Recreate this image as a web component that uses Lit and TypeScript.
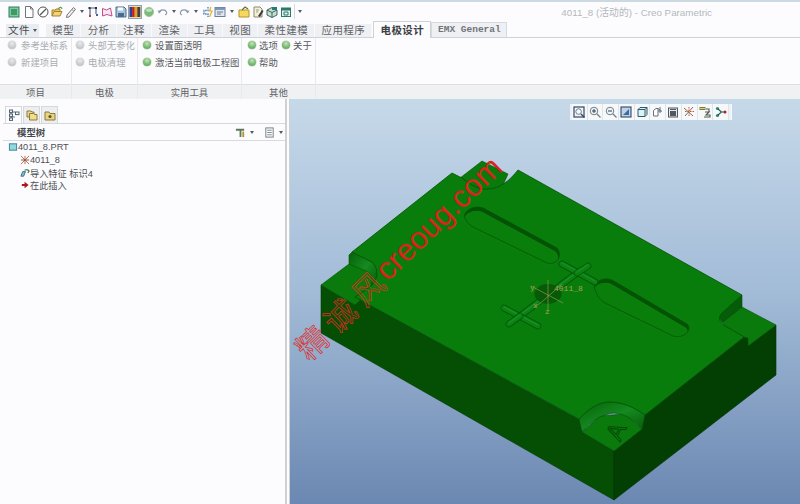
import { LitElement, html, svg, css } from 'lit';
import { customElement } from 'lit/decorators.js';

// quick access toolbar icons, 12x12 box
const quickIcons: Record<string, unknown> = {
  model: svg`<rect x="1" y="1" width="10" height="10" fill="#7fc9a8" stroke="#2f7d5a"/><rect x="3" y="3" width="6" height="6" fill="#3f9a5f"/>`,
  doc: svg`<path d="M2.5 .5h5l2.5 2.5v8.5h-7.5z" fill="#fff" stroke="#6e7478"/><path d="M7.5 .5v2.5h2.5" fill="none" stroke="#6e7478"/>`,
  no: svg`<circle cx="6" cy="6" r="5" fill="#fff" stroke="#555"/><path d="M3 9l6-6" stroke="#555" stroke-width="1.2"/>`,
  open: svg`<path d="M1 10V4h3l1-1h4v2" fill="#e8c468" stroke="#a8832c"/><path d="M1 10l2-4.5h8L9 10z" fill="#f2d27c" stroke="#a8832c"/><path d="M7 2.5l3-1.5 1 2" fill="none" stroke="#4a8a3a"/>`,
  pencil: svg`<path d="M2 9l6.5-7.5 2 1.8L4 11l-2.5.5z" fill="#f0f0f0" stroke="#777"/><path d="M7 3.5l2 1.8" stroke="#999"/>`,
  frame: svg`<path d="M3 10V2h6v6" fill="none" stroke="#4a5a78" stroke-width="1.1"/><rect x="1.5" y="1" width="2" height="2" fill="#24304a"/><rect x="8" y="1" width="2" height="2" fill="#24304a"/><rect x="2" y="9" width="2" height="2" fill="#c04040"/><rect x="9" y="8" width="2" height="2" fill="#4060b0"/>`,
  pink: svg`<path d="M1.5 2.5l4 1.5 4-2 1.5 8-5-1.5-4.5 1.5z" fill="#f6e4f0" stroke="#c0508a"/>`,
  save: svg`<path d="M1 1h8l2 2v8H1z" fill="#a8c4dc" stroke="#486c90"/><rect x="3" y="1.5" width="5" height="3" fill="#fff"/><rect x="3" y="7" width="6" height="4" fill="#486c90"/>`,
  colors: svg`<rect x=".5" y="1" width="2.6" height="10" fill="#2b3f9c"/><rect x="3.1" y="1" width="2.6" height="10" fill="#c02020"/><rect x="5.7" y="1" width="2.6" height="10" fill="#e0a020"/><rect x="8.3" y="1" width="3" height="10" fill="#404040"/>`,
  ball: svg`<circle cx="6" cy="6" r="4.6" fill="#7cba7c" stroke="#a4c8a4"/><ellipse cx="6" cy="4.2" rx="3" ry="1.7" fill="#bfe0bf"/>`,
  undo: svg`<path d="M2 6.5a4 3.4 0 0 1 7.6-.6c.4 1.4-.4 2.6-1.4 3.2" fill="none" stroke="#8a9aa8" stroke-width="1.2"/><path d="M.5 4.5l1.8 3 2-2.4z" fill="#8a9aa8"/>`,
  redo: svg`<path d="M10 6.5a4 3.4 0 0 0-7.6-.6c-.4 1.4.4 2.6 1.4 3.2" fill="none" stroke="#8a9aa8" stroke-width="1.2"/><path d="M11.5 4.5l-1.8 3-2-2.4z" fill="#8a9aa8"/>`,
  regen: svg`<path d="M7 1v3.5H3V8h4v3" fill="none" stroke="#5080b0" stroke-width="1.4" stroke-dasharray="1.6 .8"/><path d="M10 1l-1.5 4H11L8.5 11" fill="none" stroke="#e0b030" stroke-width="1.2"/>`,
  win: svg`<rect x="1" y="1.5" width="10" height="9" fill="#dfe6ee" stroke="#6a7f98"/><rect x="1" y="1.5" width="10" height="2.4" fill="#7a94b4"/><path d="M3 6h6M3 8h4" stroke="#6a7f98"/>`,
  folder: svg`<path d="M1 11V4h10v7z" fill="#f4d860" stroke="#b89428"/><path d="M4 4l3-3 3 2" fill="none" stroke="#607030" stroke-width="1.1"/>`,
  sheet: svg`<path d="M2 1h6l2 2v8H2z" fill="#f4f0d8" stroke="#8a8a70"/><path d="M6 10l4-6 1.5 1-3.5 6z" fill="#3a3a38"/><path d="M4 4h3M4 6h2" stroke="#9a9a80"/>`,
  cube: svg`<path d="M1 4l5-2.5L11 4v5l-5 2.5L1 9z" fill="#c8dcd4" stroke="#3a6a5a"/><path d="M1 4l5 2.5L11 4M6 6.5v5" fill="none" stroke="#3a6a5a"/><rect x="6" y="1" width="5" height="3" fill="#2a7a7a"/>`,
  cube2: svg`<rect x="1.5" y="2" width="9" height="8.5" fill="#e4f0ec" stroke="#2a7a6a"/><rect x="1.5" y="2" width="9" height="2.5" fill="#2a7a6a"/><path d="M4 6h4v3H4z" fill="none" stroke="#2a7a6a"/>`,
};

// [icon or arrow, slot width] in the order of the bar
const quickBar: [string, number][] = [
  ['model', 15], ['doc', 15], ['no', 14], ['open', 14], ['pencil', 14], ['arrow', 8],
  ['frame', 14], ['pink', 14], ['save', 14], ['colors', 14], ['ball', 14], ['undo', 14], ['arrow', 8],
  ['redo', 12], ['arrow', 11], ['regen', 12], ['win', 14], ['arrow', 10], ['folder', 14],
  ['sheet', 14], ['cube', 14], ['cube2', 14], ['sep', 3], ['arrow', 8],
];

const viewIcons = [
  svg`<rect x="1" y="1" width="10" height="10" fill="#f4f6f8" stroke="#30486a" stroke-width="1.2"/><circle cx="5.6" cy="5.6" r="2.8" fill="none" stroke="#708090"/><path d="M8 8l3.5 3.5" stroke="#30486a" stroke-width="1.4"/>`,
  svg`<circle cx="5" cy="5" r="3.8" fill="#eef3f6" stroke="#70808e"/><path d="M3 5h4M5 3v4" stroke="#304050"/><path d="M8 8l3.5 3.5" stroke="#70808e" stroke-width="1.3"/>`,
  svg`<circle cx="5" cy="5" r="3.8" fill="#eef3f6" stroke="#70808e"/><path d="M3 5h4" stroke="#304050"/><path d="M8 8l3.5 3.5" stroke="#70808e" stroke-width="1.3"/>`,
  svg`<rect x="1" y="1" width="10" height="10" fill="#bcd2e6" stroke="#30486a" stroke-width="1.1"/><path d="M3 9l6-6v6z" fill="#3f6c9c"/>`,
  svg`<path d="M2 3.5L4 1.5h7v7L9 10.5H2z" fill="#dff2f2" stroke="#2a5a70"/><path d="M2 3.5h7v7M9 3.5l2-2" fill="none" stroke="#2a5a70"/>`,
  svg`<path d="M1.5 4.5L4 2.5h2v7.5H1.5z" fill="#fff" stroke="#6a7278"/><path d="M6 5h3M8 1v6M6 2.5l4 3" stroke="#607080"/>`,
  svg`<rect x="1.5" y="2" width="9" height="9" fill="#e6e8ea" stroke="#505860"/><rect x="3" y="5" width="6" height="5" fill="#505860"/><path d="M3 3.5h6" stroke="#505860"/>`,
  svg`<path d="M1 2l9 8M10 1L2 10" stroke="#8a6a4a"/><path d="M6 1v9M2 5.5h9" stroke="#c05040" stroke-dasharray="1.5 1"/>`,
  svg`<rect x="1" y="1.5" width="5" height="2" fill="#d8d080" stroke="#807830"/><path d="M7 3h3v3M6 6h4l-3 3h4v2H5" fill="none" stroke="#4a5a50" stroke-width="1.1"/>`,
  svg`<circle cx="2.5" cy="2.5" r="1.6" fill="#208a70"/><circle cx="2.5" cy="9.5" r="1.6" fill="#208a70"/><path d="M3 3l3.5 3L3 9M6.5 6H10" fill="none" stroke="#205a50" stroke-width="1.1"/><circle cx="10" cy="6" r="1.5" fill="#b02020"/>`,
];

const slot1 = 'M473 227L547 263C557 266 563 255 557 248L483 208C473 204 460 213 466 220C467 223 470 225 473 227Z';
const slot2 = 'M603 302L673 336C684 339 693 330 687 324L612 280C602 276 590 284 596 292C597 296 600 299 603 302Z';

const slot = (id: string, d: string) => svg`
  <clipPath id=${id}><path d=${d}/></clipPath>
  <path d=${d} fill="#045204"/>
  <path d=${d} fill="#097e0b" transform="translate(-1 3.5)" clip-path="url(#${id})"/>
  <path d=${d} fill="none" stroke="#04500a" stroke-width=".7"/>`;

const crossBar = (x1: number, y1: number, x2: number, y2: number) => svg`
  <line x1=${x1} y1=${y1} x2=${x2} y2=${y2} stroke="#04520a" stroke-width="6.6" stroke-linecap="round"/>
  <line x1=${x1} y1=${y1} x2=${x2} y2=${y2} stroke="#0b8210" stroke-width="5.2" stroke-linecap="round"/>
  <line x1=${x1} y1=${y1 - 1} x2=${x2} y2=${y2 - 1} stroke="#17902a" stroke-width="1.4" stroke-linecap="round"/>`;

const model = svg`
  <defs>
    <linearGradient id="wall" x1="0" y1="0" x2="1" y2="1">
      <stop offset="0" stop-color="#066208"/><stop offset=".5" stop-color="#148a20"/><stop offset="1" stop-color="#055a08"/>
    </linearGradient>
  </defs>
  <!-- side faces -->
  <path d="M321 285L355 305V297L580 420L582 432L614 451V500L321 333Z" fill="#044f04" stroke="#033a03" stroke-width=".6"/>
  <path d="M614 451L642 429L644 415L744 337L748 338V346L776 325V375L614 500Z" fill="#033f03" stroke="#033403" stroke-width=".6"/>
  <!-- notch floors -->
  <path d="M321 285L349 264L372 270L372 290L355 305Z" fill="#097a0b" stroke="#045004" stroke-width=".6"/>
  <path d="M460 178L482 161L508 174L500 192L470 192Z" fill="#097a0b" stroke="#045004" stroke-width=".6"/>
  <path d="M742 307L776 325L748 346V338L744 337L725 326L715 315Z" fill="#097a0b" stroke="#045004" stroke-width=".6"/>
  <path d="M582 432L600 416L625 414L642 429L614 451Z" fill="#097a0b" stroke="#045004" stroke-width=".6"/>
  <!-- notch walls -->
  <path d="M349 264V255L352 252L372 262C379 268 380 278 370 288C374 279 373 274 366 271Z" fill="url(#wall)" stroke="#045004" stroke-width=".6"/>
  <path d="M742 295V307L723 322C718 316 716 311 722 305Z" fill="#075c0a" stroke="#045004" stroke-width=".6"/>
  <path d="M579 419L582 432C592 420 602 414 614 413C626 414 634 420 642 429L645 415C634 407 622 402 610 402C598 402 588 409 579 419Z" fill="url(#wall)" stroke="#045004" stroke-width=".6"/>
  <!-- upper face -->
  <path d="M355 297L370 287C380 278 378 268 372 262L352 252L452 173L462 178C472 186 480 190 488 189C500 189 510 180 518 170L742 295L722 313C717 318 720 323 725 326L744 337L645 415C634 407 622 402 610 402C598 402 588 409 579 419Z" fill="#097d0b" stroke="#045004" stroke-width=".8"/>
  ${slot('slot-a', slot1)}
  ${slot('slot-b', slot2)}
  <!-- cross channels -->
  ${crossBar(520, 316, 577, 273)}
  ${crossBar(504, 308, 538, 326)}
  ${crossBar(509, 324, 520, 316)}
  ${crossBar(562, 264, 595, 282)}
  ${crossBar(577, 273, 588, 266)}
  <ellipse cx="548" cy="294" rx="13.5" ry="10" fill="#065a08"/>
  <!-- datum axes -->
  <g stroke="#a9a056" stroke-width=".6">
    <path d="M548 280V310M531 286L563 303M535 308L562 284"/>
  </g>
  <g font-family="'Liberation Mono', monospace" font-size="8" fill="#a9a056">
    <text x="554" y="291">4011_8</text>
    <text x="530" y="290">y</text>
    <text x="533" y="308">x</text>
    <text x="545" y="314">z</text>
  </g>
  <text class="stamp" transform="translate(620 442) rotate(-65)" x="0" y="0">A</text>
  <!-- watermark -->
  <g transform="translate(309 362) rotate(-44)">
    <text class="mark-cn" x="0" y="0" letter-spacing="8">精诚风</text>
    <text class="mark-en" x="112" y="-3">creoug.com</text>
  </g>`;

@customElement('app-root')
export class AppRoot extends LitElement {
  static styles = css`
    :host {
      display: block;
      width: 800px;
      height: 504px;
      overflow: hidden;
      background: #fcfcfe;
      font-family: 'Liberation Sans', 'Noto Sans CJK SC', sans-serif;
    }

    .page {
      display: flex;
      flex-direction: column;
      height: 504px;
    }

    .quick {
      display: flex;
      align-items: center;
      height: 19px;
      padding-left: 6px;
      margin-bottom: 3px;
      border-top: 2px solid #cdd9e2;
    }

    .qslot {
      display: flex;
      justify-content: center;
      align-items: center;
      height: 14px;
      flex: none;
    }

    .qslot.picked {
      background: #f4d8a0;
      outline: 1px solid #8aa0b8;
      outline-offset: -1px;
    }

    .qslot svg {
      width: 12px;
      height: 12px;
    }

    .down {
      width: 0;
      height: 0;
      border-left: 2px solid transparent;
      border-right: 2px solid transparent;
      border-top: 3px solid #55595e;
    }

    .qsep {
      width: 1px;
      height: 15px;
      background: #d6d9dc;
    }

    .title {
      margin-left: auto;
      padding-right: 88px;
      font-size: 9.8px;
      color: #b4b8bc;
    }

    .tabs {
      display: flex;
      align-items: flex-end;
      height: 13px;
      padding-left: 6px;
      border-bottom: 1px solid #cfd3d7;
      font-family: 'Noto Sans CJK SC', sans-serif;
      font-size: 10.5px;
      line-height: 12px;
      letter-spacing: 0.4px;
      color: #5e6266;
    }

    .tab {
      display: flex;
      align-items: center;
      justify-content: center;
      width: 35.4px;
      height: 13px;
      padding-bottom: 1px;
      background: #eff0f3;
      border-right: 1px solid #f8f9fb;
      box-sizing: border-box;
      white-space: nowrap;
    }

    .tab.file {
      width: 34px;
      margin-right: 6px;
      background: #e9ecf0;
      gap: 3px;
      color: #45494d;
    }

    .tab.wide {
      width: 57px;
    }

    .tab.active {
      width: 58px;
      height: 17px;
      margin: 0 0 -1px 1px;
      background: #fcfcfe;
      border: 1px solid #cfd3d7;
      border-bottom: none;
      font-weight: 700;
      color: #3c4044;
    }

    .tab.emx {
      width: 76px;
      height: 15px;
      border: 1px solid #d6d9dd;
      border-bottom: none;
      font-family: 'Liberation Mono', monospace;
      font-size: 9.5px;
      letter-spacing: 0;
      font-weight: 700;
      color: #70757a;
    }

    .ribbon {
      display: flex;
      height: 61px;
      font-size: 9.4px;
    }

    .group {
      display: flex;
      flex-direction: column;
      flex: none;
      box-sizing: border-box;
      border-right: 1px solid #e8e9ec;
    }

    .g1 { width: 72px; }
    .g2 { width: 66px; }
    .g3 { width: 104px; }
    .g4 { width: 74px; }
    .rest { flex: 1; border-right: none; }

    .items {
      flex: 1;
      display: grid;
      grid-auto-rows: 17px;
      align-content: start;
      margin-top: -1px;
      transform: translateY(-1px);
      color: #54585c;
      font-family: 'Noto Sans CJK SC', sans-serif;
    }

    .g1 .items { padding-left: 8px; --dot-gap: 5px; }
    .g2 .items { padding-left: 4px; }
    .g3 .items { padding-left: 5px; }

    .g4 .items {
      grid-template-columns: 34px 1fr;
      padding-left: 6px;
      --dot-gap: 3px;
    }

    .item {
      display: flex;
      align-items: center;
      gap: var(--dot-gap, 4px);
      white-space: nowrap;
    }

    .item.off {
      color: #a9acb0;
    }

    .dot {
      width: 8px;
      height: 8px;
      border-radius: 50%;
      flex: none;
      background: radial-gradient(circle at 50% 32%, #c4e4bc 0, #78b870 55%, #5a9e58 100%);
      box-shadow: 0 0 0 0.5px #b8d0b4;
    }

    .off .dot {
      background: radial-gradient(circle at 50% 32%, #eaebec 0, #c8cacc 60%, #b8babc 100%);
      box-shadow: 0 0 0 0.5px #d8d9da;
    }

    .label {
      height: 15px;
      flex: none;
      display: flex;
      align-items: center;
      justify-content: center;
      background: #f0f1f3;
      border-top: 1px solid #dcdee1;
      box-sizing: border-box;
      color: #5e6266;
      font-family: 'Noto Sans CJK SC', sans-serif;
    }

    .main {
      flex: 1;
      display: flex;
      min-height: 0;
    }

    .side {
      width: 285px;
      flex: none;
      display: flex;
      flex-direction: column;
      padding: 7px 0 0 3px;
      box-sizing: border-box;
    }

    .side-tabs {
      display: flex;
      height: 17px;
      padding-left: 2px;
      gap: 1px;
    }

    .stab {
      width: 17px;
      display: flex;
      align-items: center;
      justify-content: center;
      background: #eceef1;
      border: 1px solid #d6d9dc;
      border-bottom: none;
      box-sizing: border-box;
    }

    .stab.on {
      background: #fcfcfe;
    }

    .stab svg {
      width: 12px;
      height: 12px;
    }

    .tree {
      flex: 1;
      border-top: 1px solid #d6d9dc;
      font-size: 9.2px;
      color: #4c5054;
    }

    .tree-head {
      display: flex;
      align-items: center;
      height: 16px;
      padding: 0 2px 0 14px;
      border-bottom: 1px solid #d8dade;
      font-family: 'Noto Sans CJK SC', sans-serif;
      font-weight: 700;
      font-size: 9.4px;
      color: #45494d;
    }

    .tree-tools {
      margin-left: auto;
      display: flex;
      align-items: center;
      gap: 4px;
    }

    .tree-tools svg {
      width: 11px;
      height: 11px;
    }

    .tools-gap {
      width: 2px;
    }

    .rows {
      padding-left: 5px;
    }

    .row {
      display: flex;
      align-items: center;
      height: 12.7px;
      white-space: nowrap;
    }

    .row.sub {
      padding-left: 12px;
    }

    .row svg {
      width: 10px;
      height: 10px;
      flex: none;
    }

    .split {
      width: 5px;
      flex: none;
      background: #fcfcfe;
      border-left: 2px solid #cfd0d4;
      border-right: 1px solid #cfd0d4;
      box-sizing: border-box;
    }

    .view {
      flex: 1;
      position: relative;
      background: linear-gradient(#c6d9e9 0, #a2bbd7 48%, #6b88b2 100%);
    }

    .view > svg {
      display: block;
      width: 510px;
      height: 405px;
    }

    .stamp {
      font-family: 'Liberation Sans', sans-serif;
      font-size: 24px;
      fill: #097d0b;
      stroke: #033f05;
      stroke-width: 0.8;
    }

    .mark-cn {
      font-family: 'Noto Sans CJK SC', sans-serif;
      font-size: 31px;
      fill: none;
      stroke: #e02a24;
      stroke-width: 0.7;
    }

    .mark-en {
      font-family: 'Liberation Sans', sans-serif;
      font-size: 31px;
      fill: #d8241c;
    }

    .view-tools {
      position: absolute;
      top: 5px;
      left: 280px;
      display: flex;
      height: 16px;
      padding: 0 2px;
      background: #eef1f4;
      border-right: 1px solid #f8f9fa;
    }

    .view-tools span {
      width: 15.7px;
      display: flex;
      align-items: center;
      justify-content: center;
      border-right: 1px solid #e0e4e8;
      box-sizing: border-box;
      background: #f7f8fa;
    }

    .view-tools svg {
      width: 12px;
      height: 12px;
    }
  `;

  private renderQuick() {
    return quickBar.map(([name, width]) => {
      const inner =
        name === 'arrow'
          ? html`<i class="down"></i>`
          : name === 'sep'
            ? html`<i class="qsep"></i>`
            : html`<svg viewBox="0 0 12 12">${quickIcons[name]}</svg>`;
      return html`<span class="qslot ${name === 'colors' ? 'picked' : ''}" style="width:${width}px">${inner}</span>`;
    });
  }

  private item(text: string, off = false) {
    return html`<div class="item ${off ? 'off' : ''}"><i class="dot"></i>${text}</div>`;
  }

  render() {
    return html`
      <div class="page">
        <div class="quick">
          ${this.renderQuick()}
          <div class="title">4011_8 (活动的) - Creo Parametric</div>
        </div>
        <div class="tabs">
          <div class="tab file">文件<i class="down"></i></div>
          <div class="tab">模型</div>
          <div class="tab">分析</div>
          <div class="tab">注释</div>
          <div class="tab">渲染</div>
          <div class="tab">工具</div>
          <div class="tab">视图</div>
          <div class="tab wide">柔性建模</div>
          <div class="tab wide">应用程序</div>
          <div class="tab active">电极设计</div>
          <div class="tab emx">EMX General</div>
        </div>
        <div class="ribbon">
          <div class="group g1">
            <div class="items">${this.item('参考坐标系', true)}${this.item('新建项目', true)}</div>
            <div class="label">项目</div>
          </div>
          <div class="group g2">
            <div class="items">${this.item('头部无参化', true)}${this.item('电极清理', true)}</div>
            <div class="label">电极</div>
          </div>
          <div class="group g3">
            <div class="items">${this.item('设置面透明')}${this.item('激活当前电极工程图')}</div>
            <div class="label">实用工具</div>
          </div>
          <div class="group g4">
            <div class="items">${this.item('选项')}${this.item('关于')}${this.item('帮助')}</div>
            <div class="label">其他</div>
          </div>
          <div class="group rest">
            <div class="items"></div>
            <div class="label"></div>
          </div>
        </div>
        <div class="main">
          <div class="side">
            <div class="side-tabs">
              <div class="stab on">
                <svg viewBox="0 0 12 12"><path d="M3 1v10M3 3h4M3 8h4" stroke="#607080" fill="none"/><rect x="1.5" y="1" width="3" height="2.4" fill="#fff" stroke="#506070"/><rect x="1.5" y="5" width="3" height="2.4" fill="#fff" stroke="#506070"/><rect x="1.5" y="9" width="3" height="2.4" fill="#fff" stroke="#506070"/><rect x="7.5" y="3" width="3.5" height="2.6" fill="#fff" stroke="#506070"/></svg>
              </div>
              <div class="stab">
                <svg viewBox="0 0 12 12"><path d="M1 2h4l1 1h2v5H1z" fill="#e8d890" stroke="#8a7a3a"/><path d="M3.5 4.5h4l1 1h2.5v5.5h-7.5z" fill="#f0de8c" stroke="#8a7a3a"/></svg>
              </div>
              <div class="stab">
                <svg viewBox="0 0 12 12"><path d="M1 3h4l1 1.5h5V11H1z" fill="#e8d480" stroke="#8a7a3a"/><circle cx="6" cy="7.5" r="1.6" fill="#5a5a20"/></svg>
              </div>
            </div>
            <div class="tree">
              <div class="tree-head">
                模型树
                <div class="tree-tools">
                  <svg viewBox="0 0 12 12"><path d="M1 2h9v2H7v7H5V4H1z" fill="#5a7a5a"/><path d="M8 5h2v6H8z" fill="#c08a3a"/></svg>
                  <i class="down"></i>
                  <i class="tools-gap"></i>
                  <svg viewBox="0 0 12 12"><rect x="2" y="1" width="8" height="10" fill="#fff" stroke="#707478"/><path d="M3.5 3.5h5M3.5 6h5M3.5 8.5h5" stroke="#70808a"/></svg>
                  <i class="down"></i>
                </div>
              </div>
              <div class="rows">
                <div class="row">
                  <svg viewBox="0 0 11 11"><rect x="1.5" y="2" width="8" height="7" fill="#8fd8dc" stroke="#3a7a94"/></svg>4011_8.PRT
                </div>
                <div class="row sub">
                  <svg viewBox="0 0 11 11"><path d="M1 1l9 9M10 1l-9 9M5.5 1v9" stroke="#b86040" fill="none"/><path d="M1 5.5h9" stroke="#705040"/></svg>4011_8
                </div>
                <div class="row sub">
                  <svg viewBox="0 0 11 11"><path d="M1 9l2-5h3l-2 5z" fill="#8ac0d8" stroke="#306880"/><path d="M5 2.5a3 2 0 0 1 5 1l-1.5 2" fill="none" stroke="#2a7a3a" stroke-width="1.2"/></svg>导入特征 标识4
                </div>
                <div class="row sub">
                  <svg viewBox="0 0 11 11"><path d="M2 4.5h3V2l4.5 3.5L5 9V6.5H2z" fill="#a81818"/></svg>在此插入
                </div>
              </div>
            </div>
          </div>
          <div class="split"></div>
          <div class="view">
            <svg viewBox="290 99 510 405">${model}</svg>
            <div class="view-tools">
              ${viewIcons.map((icon) => html`<span><svg viewBox="0 0 12 12">${icon}</svg></span>`)}
            </div>
          </div>
        </div>
      </div>
    `;
  }
}

declare global {
  interface HTMLElementTagNameMap {
    'app-root': AppRoot;
  }
}
